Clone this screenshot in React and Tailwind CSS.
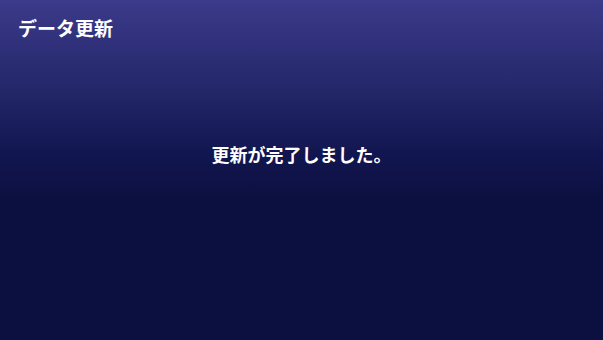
export default function App() {
  return (
    <div
      className="flex flex-col w-[603px] h-[340px] overflow-hidden bg-[linear-gradient(to_bottom,#3b3a8b_0%,#25286a_25%,#121650_45%,#0c1041_58%,#0c1040_100%)] text-white"
      style={{ fontFamily: '"Noto Sans CJK JP", "Noto Sans", sans-serif' }}
    >
      <div className="px-[18px] pt-[14px] text-[19px] font-bold leading-[28px]">データ更新</div>
      <p className="mt-[98px] text-center text-[18px] font-bold leading-[28px]">更新が完了しました。</p>
    </div>
  );
}
